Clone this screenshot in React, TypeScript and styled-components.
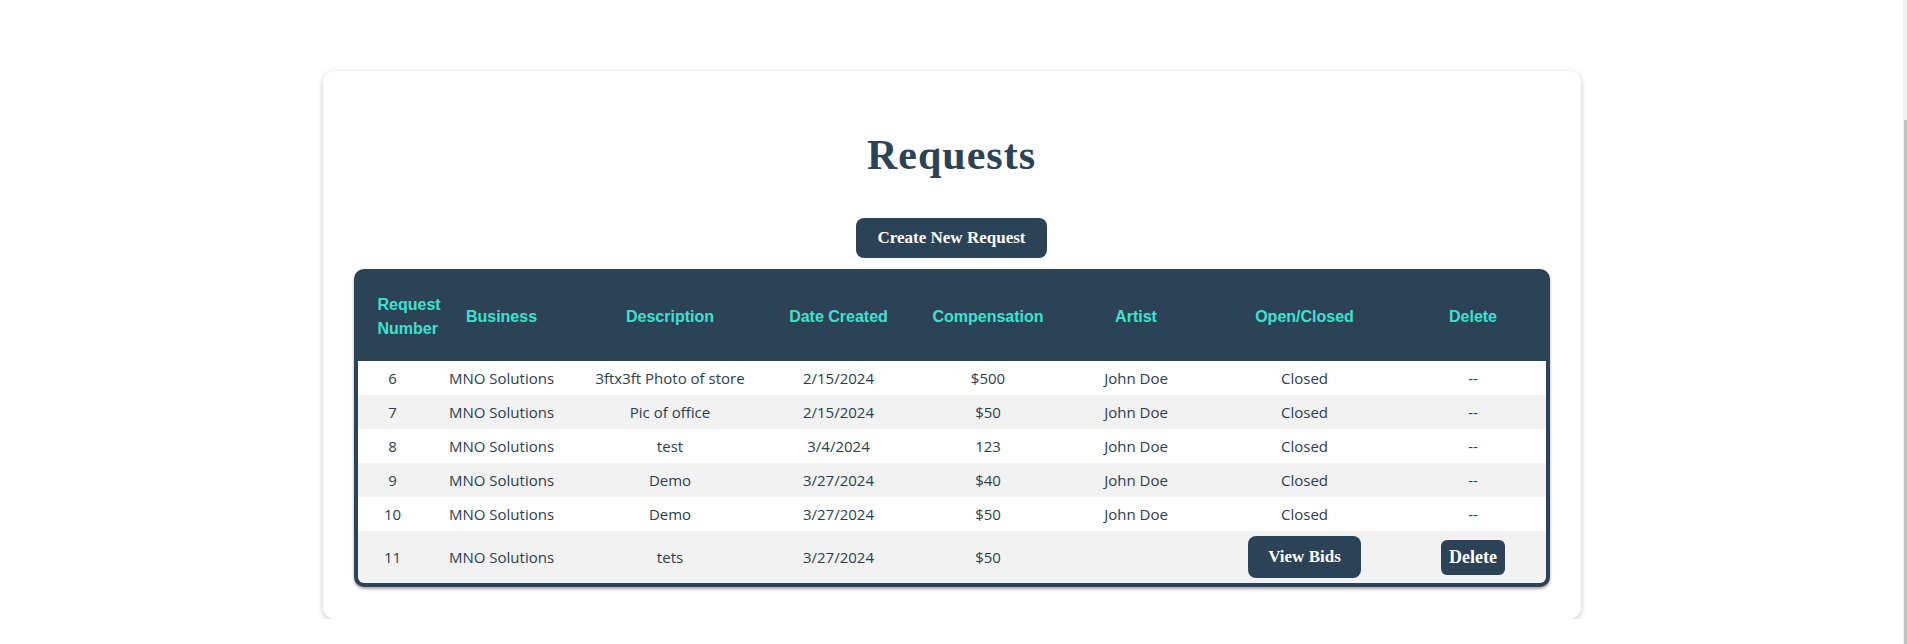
import React from 'react';
import styled, { createGlobalStyle } from 'styled-components';

const navy = '#2b4257';

const GlobalStyle = createGlobalStyle`
  html, body {
    margin: 0;
    padding: 0;
    background: #ffffff;
    overflow: hidden;
  }
`;

interface Request {
  id: number;
  business: string;
  description: string;
  created: string;
  compensation: string;
  artist: string;
  closed: boolean;
}

const requests: Request[] = [
  { id: 6, business: 'MNO Solutions', description: '3ftx3ft Photo of store', created: '2/15/2024', compensation: '$500', artist: 'John Doe', closed: true },
  { id: 7, business: 'MNO Solutions', description: 'Pic of office', created: '2/15/2024', compensation: '$50', artist: 'John Doe', closed: true },
  { id: 8, business: 'MNO Solutions', description: 'test', created: '3/4/2024', compensation: '123', artist: 'John Doe', closed: true },
  { id: 9, business: 'MNO Solutions', description: 'Demo', created: '3/27/2024', compensation: '$40', artist: 'John Doe', closed: true },
  { id: 10, business: 'MNO Solutions', description: 'Demo', created: '3/27/2024', compensation: '$50', artist: 'John Doe', closed: true },
  { id: 11, business: 'MNO Solutions', description: 'tets', created: '3/27/2024', compensation: '$50', artist: '', closed: false },
];

const columns = [
  { label: 'Request Number', width: 70 },
  { label: 'Business', width: 148 },
  { label: 'Description', width: 189 },
  { label: 'Date Created', width: 148 },
  { label: 'Compensation', width: 151 },
  { label: 'Artist', width: 145 },
  { label: 'Open/Closed', width: 192 },
  { label: 'Delete', width: 145 },
];

const Requests: React.FC = () => {
  return (
    <Page>
      <GlobalStyle />
      <Card>
        <Title>Requests</Title>
        <PrimaryButton>Create New Request</PrimaryButton>
        <TableFrame>
          <Table>
            <colgroup>
              {columns.map((c) => (
                <col key={c.label} style={{ width: c.width }} />
              ))}
            </colgroup>
            <thead>
              <tr>
                {columns.map((c, i) => (
                  <HeadCell key={c.label} first={i === 0}>{c.label}</HeadCell>
                ))}
              </tr>
            </thead>
            <tbody>
              {requests.map((r) => (
                <Row key={r.id}>
                  <Cell>{r.id}</Cell>
                  <Cell>{r.business}</Cell>
                  <Cell>{r.description}</Cell>
                  <Cell>{r.created}</Cell>
                  <Cell>{r.compensation}</Cell>
                  <Cell>{r.artist}</Cell>
                  <Cell>{r.closed ? 'Closed' : <RowButton>View Bids</RowButton>}</Cell>
                  <Cell>{r.closed ? '--' : <RowButton small>Delete</RowButton>}</Cell>
                </Row>
              ))}
            </tbody>
          </Table>
        </TableFrame>
      </Card>
      <ScrollTrack>
        <ScrollThumb />
      </ScrollTrack>
    </Page>
  );
};

export default Requests;

const Page = styled.div`
  margin-right: 4px;
  padding-top: 71px;
  display: flex;
  justify-content: center;
`;

const Card = styled.div`
  width: 1258px;
  box-sizing: border-box;
  padding: 59px 31px 32px;
  background: #ffffff;
  border-radius: 12px;
  box-shadow: 0 2px 6px rgba(0, 0, 0, 0.22);
  display: flex;
  flex-direction: column;
  align-items: center;
`;

const Title = styled.h1`
  margin: 0 0 38px;
  font-family: 'Liberation Serif', serif;
  font-size: 42px;
  line-height: 50px;
  letter-spacing: 1px;
  font-weight: 700;
  color: ${navy};
`;

const PrimaryButton = styled.button`
  margin: 0 0 11px;
  padding: 10px 22px;
  border: none;
  border-radius: 8px;
  background: ${navy};
  color: #ffffff;
  font-family: 'Liberation Serif', serif;
  font-weight: 700;
  font-size: 17px;
  line-height: 20px;
  cursor: pointer;
`;

const TableFrame = styled.div`
  align-self: stretch;
  border: 4px solid ${navy};
  border-radius: 10px;
  background: ${navy};
  overflow: hidden;
  box-shadow: 0 2px 3px rgba(0, 0, 0, 0.35);
`;

const Table = styled.table`
  width: 100%;
  table-layout: fixed;
  border-collapse: collapse;
`;

const HeadCell = styled.th<{ first?: boolean }>`
  padding: 20px 8px;
  padding-left: ${({ first }) => (first ? '20px' : '8px')};
  padding-right: ${({ first }) => (first ? '0' : '8px')};
  text-align: ${({ first }) => (first ? 'left' : 'center')};
  vertical-align: middle;
  background: ${navy};
  color: #40e0d0;
  font-family: 'Liberation Sans', Arial, sans-serif;
  font-weight: 700;
  font-size: 16px;
  line-height: 24px;
  overflow: visible;
  white-space: normal;
`;

const Row = styled.tr`
  background: #ffffff;

  &:nth-child(even) {
    background: #f2f2f2;
  }
`;

const Cell = styled.td`
  padding: 5px 4px;
  text-align: center;
  vertical-align: middle;
  font-family: 'Open Sans', 'Noto Sans', sans-serif;
  font-size: 15px;
  line-height: 24px;
  color: #2c3e50;
  white-space: nowrap;
`;

const RowButton = styled.button<{ small?: boolean }>`
  display: inline-block;
  vertical-align: middle;
  padding: ${({ small }) => (small ? '7px 8px' : '11px 20px')};
  border: none;
  border-radius: ${({ small }) => (small ? '6px' : '8px')};
  background: ${navy};
  color: #ffffff;
  font-family: 'Liberation Serif', serif;
  font-weight: 700;
  font-size: ${({ small }) => (small ? '18px' : '17px')};
  line-height: ${({ small }) => (small ? '21px' : '20px')};
  cursor: pointer;
`;

const ScrollTrack = styled.div`
  position: fixed;
  top: 0;
  right: 0;
  bottom: 0;
  width: 4px;
  background: #f1f1f1;
`;

const ScrollThumb = styled.div`
  position: absolute;
  top: 120px;
  bottom: 0;
  right: 0;
  width: 3px;
  background: #c1c1c1;
`;
